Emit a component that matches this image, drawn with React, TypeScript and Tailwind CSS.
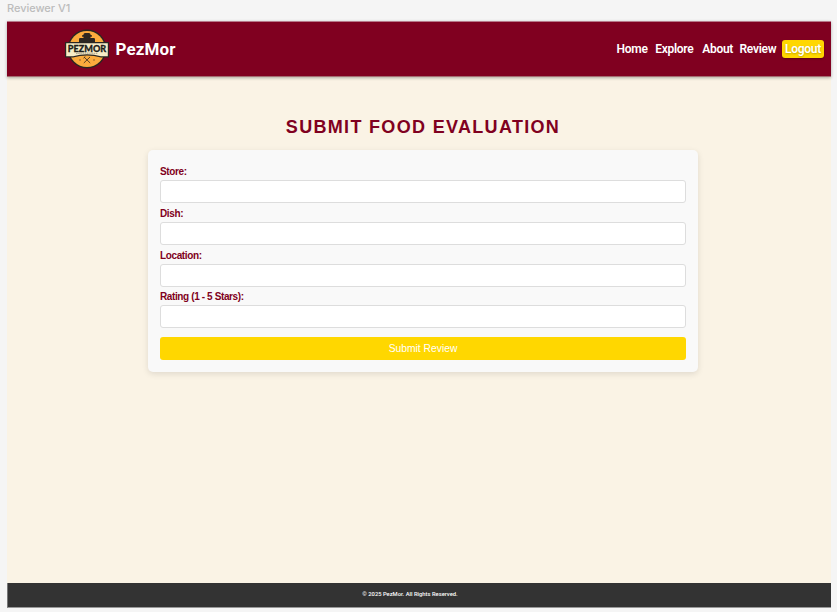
import React from "react";

function Logo() {
  return (
    <svg width="46" height="40" viewBox="0 0 46 40" className="shrink-0 overflow-visible">
      <circle cx="23" cy="20" r="19.4" fill="#292622" />
      <circle cx="23" cy="20" r="18" fill="#fbab3d" />
      <g fill="#2c2721">
        <rect x="19.5" y="4" width="7" height="7" rx="1.5" />
        <rect x="18" y="6" width="10" height="1.8" rx=".9" />
        <rect x="15" y="9" width="6.5" height="5" rx="1.2" />
        <rect x="24.5" y="9" width="6.5" height="5" rx="1.2" />
        <rect x="20.5" y="10" width="5" height="4" />
      </g>
      <path d="M1 13H45V28.5H37Q23 24.5 9 28.5H1Z" fill="#292622" />
      <path d="M2.2 14.3H43.8V27.3H37Q23 23.3 9 27.3H2.2Z" fill="#f8edc7" />
      <text x="3.8" y="22.6" textLength="38.4" lengthAdjust="spacingAndGlyphs" fontFamily="Lato, sans-serif" fontWeight="900" fontSize="10.2" fill="#201e1b" stroke="#201e1b" strokeWidth=".3">PEZMOR</text>
      <path d="M12 24.6Q23 23.6 34 24.6" fill="none" stroke="#81786b" strokeWidth=".7" strokeDasharray="1.5 .7" />
      <g fill="none" stroke="#493322" strokeWidth=".9">
        <path d="m20 28 6.2 6M26 28l-6.2 6M19.5 29.2l1.8-1.7" />
        <path d="M15 31h2M29 31h2" strokeWidth=".6" />
      </g>
    </svg>
  );
}

const fields = ["Store:", "Dish:", "Location:", "Rating (1 - 5 Stars):"];

export default function App() {
  return (
    <div className="h-[612px] w-[837px] overflow-hidden bg-[#f5f5f5] pl-[7px] font-['Roboto',sans-serif]">
      <div className="h-[21px] pt-[2px] font-['Inter',sans-serif] text-[11px] leading-[13px] font-medium tracking-[-0.03px] text-[#bcbcbc]">Reviewer V1</div>
      <div className="flex h-[587px] w-[824px] flex-col bg-[#faf3e5]">
        <header className="flex h-[56px] shrink-0 items-center border-y border-t-[#b7798a] border-b-[#a56d72] bg-[#800020] pl-[57px] pr-[7px] text-white shadow-[0_1px_3px_rgba(0,0,0,0.3)]">
          <Logo />
          <div className="ml-[5.5px] text-[17px] leading-5 font-bold tracking-[0.1px]">PezMor</div>
          <nav className="ml-auto flex items-center text-[12px] leading-[17px] font-semibold tracking-[-0.28px]">
            <a className="w-[38.7px]">Home</a>
            <a className="w-[47px]">Explore</a>
            <a className="w-[37.3px]">About</a>
            <a className="w-[42.5px]">Review</a>
            <button className="h-[18px] w-[42px] rounded-[3px] bg-[#ffd700] text-center shadow-[0_1px_2px_rgba(0,0,0,0.3)] [text-shadow:0_1px_2px_rgba(0,0,0,0.25)]">Logout</button>
          </nav>
        </header>
        <main className="flex-1 pl-[141px] font-['Liberation_Sans',Arial,sans-serif]">
          <h1 className="mt-[39px] w-[550px] text-center text-[18px] leading-[22px] font-bold tracking-[1.32px] text-[#800020]">SUBMIT FOOD EVALUATION</h1>
          <form className="mt-[12px] h-[222px] w-[550px] rounded-[5px] bg-[#f9f9f9] px-[12px] pt-[14px] shadow-[0_2px_6px_rgba(0,0,0,0.11)]">
            {fields.map((label) => (
              <div key={label} className="h-[41.8px]">
                <label className="block h-[16px] text-[10px] leading-[15px] font-bold tracking-[-0.38px] text-[#800020]">{label}</label>
                <input aria-label={label} className="block h-[23px] w-[526px] rounded-[3px] border border-[#dddddd] bg-white" />
              </div>
            ))}
            <button className="mt-[6px] block h-[23px] w-[526px] rounded-[3px] bg-[#ffd700] text-[10.3px] leading-[23px] text-white">Submit Review</button>
          </form>
        </main>
        <footer className="h-[25px] shrink-0 border-b border-l border-b-[#999] border-l-[#777] bg-[#333] text-center text-[5.8px] leading-[23px] font-medium text-white"><span className="relative -left-[9.5px]">© 2025 PezMor. All Rights Reserved.</span></footer>
      </div>
    </div>
  );
}
